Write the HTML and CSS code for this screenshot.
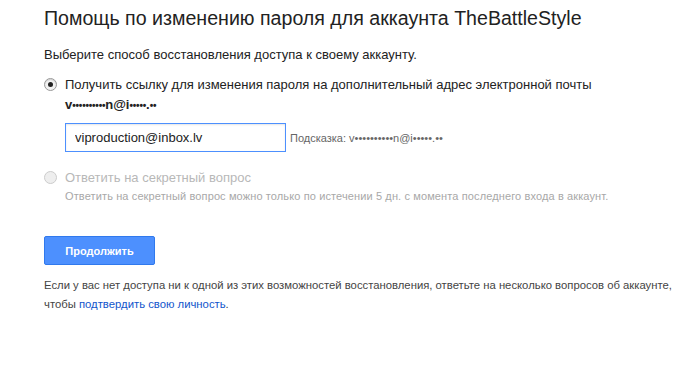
FILE: index.html
```html
<!DOCTYPE html>
<html>
<head>
  <title>Помощь по изменению пароля</title>
  <link rel="stylesheet" href="styles.css">
</head>
<body>
  <div class="page">
    <h1 class="title">Помощь по изменению пароля для аккаунта TheBattleStyle</h1>

    <p class="intro">Выберите способ восстановления доступа к своему аккаунту.</p>

    <div class="option">
      <span class="radio checked"></span>
      <div class="option-body">
        <div class="option-label">Получить ссылку для изменения пароля на дополнительный адрес электронной почты</div>
        <div class="masked">v<span class="dots">••••••••••</span>n@i<span class="dots">•••••</span>.<span class="dots">••</span></div>
        <div class="email-row">
          <input type="text" class="email" value="viproduction@inbox.lv">
          <span class="hint">Подсказка: v••••••••••n@i•••••.••</span>
        </div>
      </div>
    </div>

    <div class="option disabled">
      <span class="radio"></span>
      <div class="option-body">
        <div class="option-label">Ответить на секретный вопрос</div>
        <div class="note">Ответить на секретный вопрос можно только по истечении 5 дн. с момента последнего входа в аккаунт.</div>
      </div>
    </div>

    <button class="continue">Продолжить</button>

    <p class="footer">Если у вас нет доступа ни к одной из этих возможностей восстановления, ответьте на несколько вопросов об аккаунте, чтобы <a href="#">подтвердить свою личность</a>.</p>
  </div>
</body>
</html>
```

FILE: styles.css
```css
body {
  margin: 0;
  background: #fff;
  font-family: "Liberation Sans", Arial, sans-serif;
  color: #222;
}
.page {
  padding: 6px 0 0 44px;
  width: 650px;
}
.title {
  margin: 0;
  font-size: 19.6px;
  font-weight: normal;
  line-height: 24px;
  color: #222;
}
.intro {
  margin: 17px 0 0;
  font-size: 13px;
  line-height: 16px;
  color: #222;
}
.option {
  display: flex;
  gap: 8px;
  margin-top: 14px;
}
.radio {
  width: 11px;
  height: 11px;
  border: 1px solid #999;
  border-radius: 50%;
  background: #f2f2f2;
  box-shadow: inset 0 1px 1px rgba(0, 0, 0, 0.15);
  position: relative;
  margin-top: 1px;
  flex: none;
}
.radio.checked::after {
  content: "";
  position: absolute;
  left: 3px;
  top: 3px;
  width: 5px;
  height: 5px;
  border-radius: 50%;
  background: #222;
}
.option-label {
  font-size: 13px;
  line-height: 16px;
}
.masked {
  font-size: 13px;
  font-weight: bold;
  line-height: 18px;
  margin-top: 3px;
}
.masked .dots {
  font-size: 10px;
  letter-spacing: -0.2px;
}
.email-row {
  display: flex;
  align-items: center;
  gap: 4px;
  margin-top: 8px;
}
.email {
  width: 221px;
  height: 29px;
  box-sizing: border-box;
  border: 1px solid #4d90fe;
  padding: 0 9px;
  font-family: "Liberation Sans", Arial, sans-serif;
  font-size: 13px;
  color: #222;
  margin: 0;
  box-shadow: inset 0 1px 2px rgba(0, 0, 0, 0.1);
}
.hint {
  font-size: 11px;
  color: #666;
}
.option.disabled {
  margin-top: 18px;
}
.option.disabled .radio {
  border-color: #ccc;
  background: #eee;
  box-shadow: none;
}
.option.disabled .option-label {
  color: #b8b8b8;
}
.note {
  font-size: 11px;
  line-height: 15px;
  letter-spacing: 0.12px;
  color: #a8a8a8;
  margin-top: 3px;
}
.continue {
  display: block;
  margin-top: 32px;
  width: 111px;
  height: 29px;
  border: 1px solid #3079ed;
  border-radius: 2px;
  background: #4d90fe;
  color: #fff;
  font-family: "Liberation Sans", Arial, sans-serif;
  font-size: 11px;
  font-weight: bold;
}
.footer {
  margin: 11px 0 0;
  font-size: 11.3px;
  line-height: 19px;
  color: #444;
}
.footer a {
  color: #15c;
  text-decoration: none;
}
```
